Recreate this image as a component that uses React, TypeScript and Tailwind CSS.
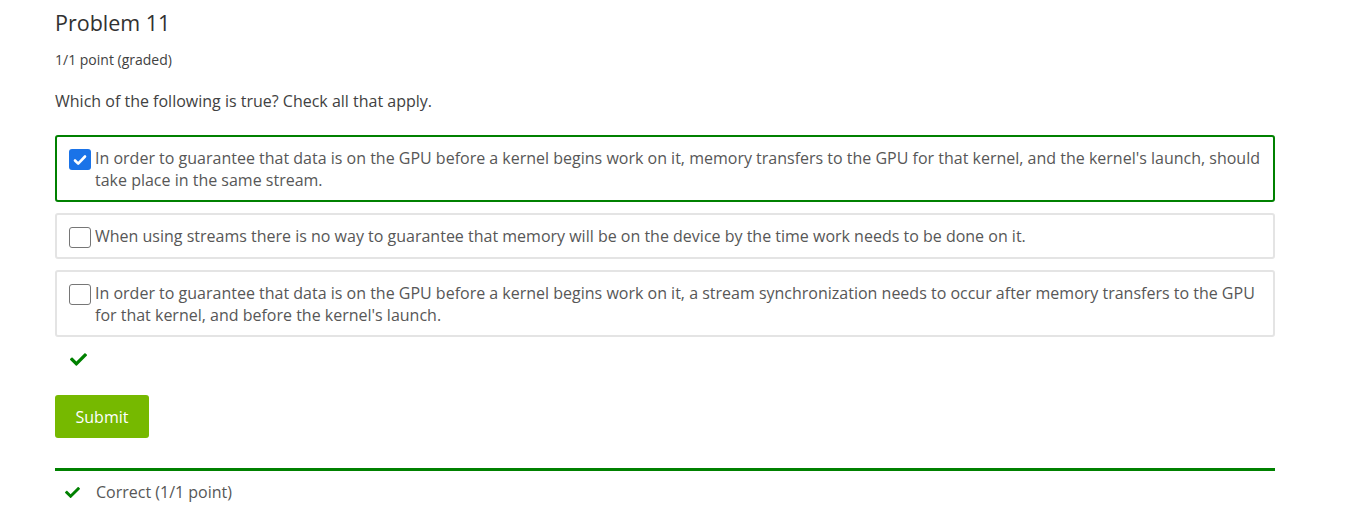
import React from "react";

const Check = ({ className }: { className?: string }) => (
  <svg viewBox="0 0 512 512" className={className} fill="currentColor">
    <path d="M173.898 439.404l-166.4-166.4c-9.997-9.997-9.997-26.206 0-36.204l36.203-36.204c9.997-9.998 26.207-9.998 36.204 0L192 312.69 432.095 72.596c9.997-9.997 26.207-9.997 36.204 0l36.203 36.204c9.997 9.997 9.997 26.206 0 36.204l-294.4 294.401c-9.998 9.997-26.207 9.997-36.204-.001z" />
  </svg>
);

const Box = ({ checked }: { checked: boolean }) =>
  checked ? (
    <span className="mt-[2px] flex h-[21px] w-[22px] shrink-0 items-center justify-center rounded-[3px] bg-[#1a73e8]">
      <svg viewBox="0 0 16 16" className="h-[16px] w-[16px]" fill="none" stroke="white" strokeWidth="2.6" strokeLinecap="round" strokeLinejoin="round">
        <path d="M3 8.5l3.2 3.2L13 4.5" />
      </svg>
    </span>
  ) : (
    <span className="mt-[2px] h-[21px] w-[22px] shrink-0 rounded-[3px] border border-[#767676] bg-white" />
  );

const options = [
  {
    checked: true,
    text: "In order to guarantee that data is on the GPU before a kernel begins work on it, memory transfers to the GPU for that kernel, and the kernel's launch, should take place in the same stream.",
  },
  {
    checked: false,
    text: "When using streams there is no way to guarantee that memory will be on the device by the time work needs to be done on it.",
  },
  {
    checked: false,
    text: "In order to guarantee that data is on the GPU before a kernel begins work on it, a stream synchronization needs to occur after memory transfers to the GPU for that kernel, and before the kernel's launch.",
  },
];

export default function App() {
  return (
    <div
      className="min-h-[527px] w-[1350px] bg-white text-[#414141]"
      style={{ fontFamily: '"Open Sans", sans-serif' }}
    >
      <div className="w-[1220px] pl-[55px] box-content">
        <h1 className="pt-[8px] text-[21.5px] leading-[30px] text-[#313131]">Problem 11</h1>
        <div className="mt-[12px] text-[14px] leading-[20px] text-[#414141]">1/1 point (graded)</div>
        <p className="mt-[20px] text-[16px] leading-[22px] text-[#414141]">
          Which of the following is true? Check all that apply.
        </p>
        <div className="mt-[23px] flex flex-col gap-[11px]">
          {options.map((o, i) => (
            <label
              key={i}
              className={
                "flex items-start gap-[4px] rounded-[3px] border-2 px-[12px] pt-[10px] pb-[9px] text-[16px] leading-[22px] text-[#575757] " +
                (o.checked ? "border-[#008100]" : "border-[#e4e4e4]")
              }
            >
              <Box checked={o.checked} />
              <span>{o.text}</span>
            </label>
          ))}
        </div>
        <div className="mt-[14px] flex pl-[15px] text-[#008100]">
          <Check className="block h-[17px] w-[17px]" />
        </div>
        <button className="mt-[27px] block h-[43px] w-[94px] rounded-[3px] bg-[#76b900] text-[16px] text-white">
          Submit
        </button>
        <div className="mt-[30px] h-[3px] bg-[#008100]" />
        <div className="mt-[10px] flex items-center pl-[10px] text-[16px] leading-[22px] text-[#575757]">
          <Check className="block h-[15px] w-[15px] text-[#008100]" />
          <span className="ml-[16px]">Correct (1/1 point)</span>
        </div>
      </div>
    </div>
  );
}
